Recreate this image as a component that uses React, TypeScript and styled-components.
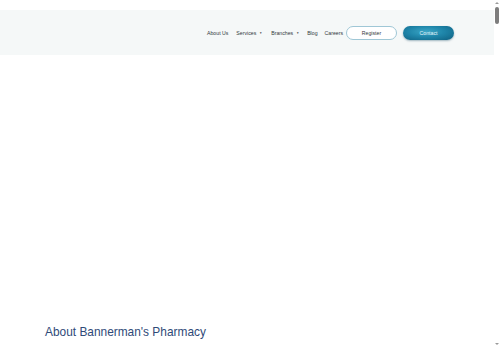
import React from "react";
import styled, { createGlobalStyle } from "styled-components";

const Global = createGlobalStyle`
  html, body { margin: 0; padding: 0; background: #ffffff; }
  body { font-family: "Liberation Sans", Arial, sans-serif; }
`;

const Page = styled.div`
  padding-top: 10px;
  margin-right: 6px;
  min-height: 6900px;
`;

const Header = styled.header`
  height: 45px;
  background: #f5f8f8;
  display: flex;
  align-items: center;
  justify-content: flex-end;
  padding-right: 40px;
`;

const Nav = styled.nav`
  display: flex;
  align-items: center;
  gap: 7px;
  margin-top: 1px;
`;

const NavItem = styled.span<{ $extra?: number }>`
  font-size: 5.2px;
  color: #333a40;
  display: inline-flex;
  align-items: center;
  gap: 3px;
  margin-right: ${(p) => p.$extra ?? 0}px;
`;

const Caret = styled.span`
  font-size: 3px;
  color: #444;
`;

const Pill = styled.button<{ $filled?: boolean }>`
  width: 51px;
  height: 14px;
  border-radius: 7px;
  font-family: "Liberation Sans", Arial, sans-serif;
  font-size: 5.2px;
  padding: 0;
  cursor: pointer;
  border: ${(p) => (p.$filled ? "none" : "1px solid #9fc7d6")};
  background: ${(p) =>
    p.$filled
      ? "radial-gradient(ellipse at 45% 40%, #3ba6c6 0%, #1f86aa 45%, #0e5f80 100%)"
      : "#ffffff"};
  color: ${(p) => (p.$filled ? "#e8f6fb" : "#333a40")};
  box-shadow: ${(p) => (p.$filled ? "0 1px 2px rgba(0,60,90,0.35)" : "none")};
`;

const Buttons = styled.div`
  display: flex;
  gap: 6px;
  margin-left: -4px;
`;

const Hero = styled.section`
  height: 258px;
`;

const About = styled.section`
  padding: 12px 0 0 45px;
`;

const Title = styled.h2`
  margin: 0;
  font-family: "Liberation Sans", Arial, sans-serif;
  font-weight: 400;
  font-size: 11.9px;
  color: #2f4a78;
`;

const ScrollBar = styled.div`
  position: fixed;
  top: 0;
  right: 0;
  width: 6px;
  height: 100vh;
  background: #ffffff;
  display: flex;
  flex-direction: column;
  align-items: center;
`;

const Arrow = styled.div<{ $down?: boolean }>`
  margin-top: ${(p) => (p.$down ? "auto" : "2px")};
  margin-bottom: ${(p) => (p.$down ? "3px" : "0")};
  width: 0;
  height: 0;
  border-left: 2px solid transparent;
  border-right: 2px solid transparent;
  ${(p) =>
    p.$down
      ? "border-top: 2px solid #9a9a9a;"
      : "border-bottom: 2px solid #9a9a9a;"}
`;

const Thumb = styled.div`
  margin-top: 3px;
  width: 4px;
  height: 17px;
  border-radius: 2px;
  background: #7d7d7d;
`;

export default function App() {
  return (
    <>
      <Global />
      <Page>
        <Header>
          <Nav>
            <NavItem $extra={1}>About Us</NavItem>
            <NavItem $extra={2}>
              Services <Caret>▼</Caret>
            </NavItem>
            <NavItem $extra={1}>
              Branches <Caret>▼</Caret>
            </NavItem>
            <NavItem>Blog</NavItem>
            <NavItem>Careers</NavItem>
            <Buttons>
              <Pill>Register</Pill>
              <Pill $filled>Contact</Pill>
            </Buttons>
          </Nav>
        </Header>
        <Hero />
        <About>
          <Title>About Bannerman's Pharmacy</Title>
        </About>
      </Page>
      <ScrollBar>
        <Arrow />
        <Thumb />
        <Arrow $down />
      </ScrollBar>
    </>
  );
}
